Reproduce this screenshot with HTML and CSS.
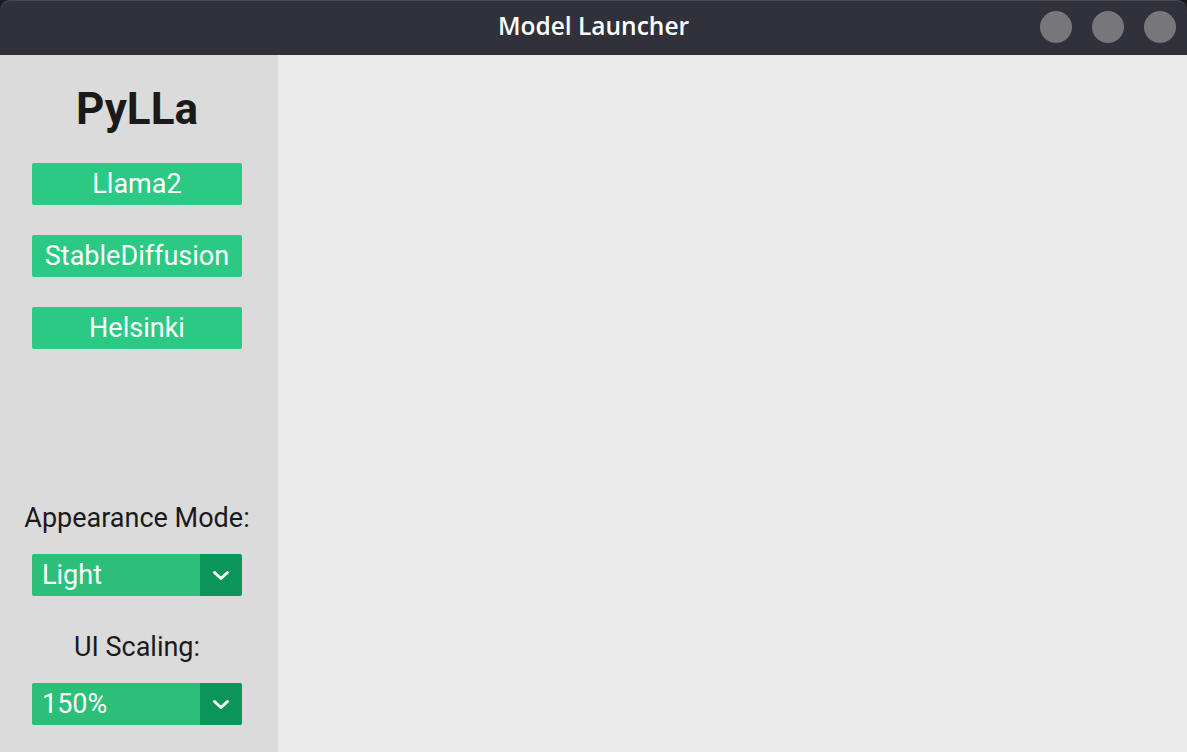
FILE: index.html
```html
<!DOCTYPE html>
<html>
<head>
<meta charset="utf-8">
<link rel="stylesheet" href="styles.css">
</head>
<body>
<div class="window">
  <header class="titlebar">
    <div class="title">Model Launcher</div>
    <div class="controls">
      <span class="dot"></span><span class="dot"></span><span class="dot"></span>
    </div>
  </header>
  <div class="content">
    <aside class="sidebar">
      <h1 class="logo">PyLLa</h1>
      <div class="models">
        <button class="btn">Llama2</button>
        <button class="btn">StableDiffusion</button>
        <button class="btn">Helsinki</button>
      </div>
      <div class="settings">
        <div class="label">Appearance Mode:</div>
        <div class="select"><span class="value">Light</span><span class="arrow"><svg width="18" height="11" viewBox="0 0 18 11"><path d="M2.5 2.5 L9 8.5 L15.5 2.5" fill="none" stroke="#fff" stroke-width="3" stroke-linecap="round" stroke-linejoin="round"/></svg></span></div>
        <div class="label label2">UI Scaling:</div>
        <div class="select"><span class="value">150%</span><span class="arrow"><svg width="18" height="11" viewBox="0 0 18 11"><path d="M2.5 2.5 L9 8.5 L15.5 2.5" fill="none" stroke="#fff" stroke-width="3" stroke-linecap="round" stroke-linejoin="round"/></svg></span></div>
      </div>
    </aside>
    <main class="main"></main>
  </div>
</div>
</body>
</html>
```
FILE: styles.css
```css
* { box-sizing: border-box; }
html, body { margin: 0; padding: 0; }
body { background: #1c1c20; width: 1187px; height: 752px; overflow: hidden; }
.window { width: 1187px; height: 752px; display: flex; flex-direction: column; }
.titlebar {
  height: 55px; flex: none; background: #31313b;
  border-radius: 10px 10px 0 0; border-top: 1px solid #4a4a55;
  display: flex; align-items: center; justify-content: center; position: relative;
}
.title { font-family: "Open Sans", sans-serif; font-weight: 600; font-size: 24.5px; line-height: 30px; color: #fff; margin-top: -4px; }
.controls { position: absolute; right: 11px; top: 10px; display: flex; gap: 20px; }
.dot { width: 32px; height: 32px; border-radius: 50%; background: #77767b; display: block; }
.content { flex: 1; display: flex; }
.sidebar {
  width: 278px; flex: none; background: #dbdbdb;
  display: flex; flex-direction: column; align-items: center;
  padding-right: 4px;
  font-family: Roboto, sans-serif;
}
.logo { margin: 28px 0 0; font-size: 44px; font-weight: 700; color: #1a1a1a; line-height: 52px; }
.models { margin-top: 28px; display: flex; flex-direction: column; gap: 30px; }
.btn {
  width: 210px; height: 42px; border: none; border-radius: 2px; background: #2cc985;
  color: #fff; font-family: Roboto, sans-serif; font-size: 27px; padding: 0;
}
.settings { margin-top: auto; margin-bottom: 27px; display: flex; flex-direction: column; align-items: center; }
.label { font-size: 27px; color: #1a1a1a; line-height: 30px; margin-bottom: 21px; }
.label2 { margin-top: 36px; }
.select { width: 210px; height: 42px; display: flex; border-radius: 2px; overflow: hidden; }
.value { flex: 1; background: #2cbf79; color: #fff; font-size: 27px; line-height: 42px; padding-left: 10px; }
.arrow { width: 42px; background: #0c955a; display: flex; align-items: center; justify-content: center; }
.main { flex: 1; background: #ebebeb; }
```
